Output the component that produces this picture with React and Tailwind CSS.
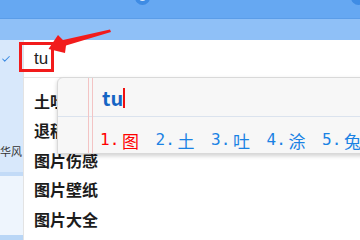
import { Check } from 'lucide-react'

const suggestions = ['土吐', '退稿', '图片伤感', '图片壁纸', '图片大全']
const candidates = ['图', '土', '吐', '涂', '兔']

function ImeWindow() {
  return (
    <div className="absolute left-[57px] top-[77px] w-[320px] h-[77px] rounded-tl-[6px] border border-[#d9d9d9] bg-[#f7f7f7] shadow-[0_2px_4px_rgba(0,0,0,0.18)]">
      {/* notebook-style margin lines */}
      <div className="absolute left-[30px] top-0 bottom-0 w-px bg-[#f3c4c4]" />
      <div className="absolute left-[34px] top-0 bottom-0 w-px bg-[#f3c4c4]" />
      <div className="h-[39px] flex items-end pl-[44px] pb-[6px] border-b border-[#dbe3ee]">
        <span className="text-[20px] leading-[24px] font-bold text-[#1565c4]">tu</span>
        <span className="w-[2px] h-[20px] mb-[2px] bg-[#f01010]" />
      </div>
      <div className="h-[36px] flex items-center pl-[42px] pt-[10px]">
        {candidates.map((c, i) => (
          <span
            key={c}
            className={`w-[55.5px] shrink-0 flex items-center text-[17px] leading-none ${i === 0 ? 'text-[#f00]' : 'text-[#1a82e4]'}`}
          >
            <span className="w-[22px] text-[16px]" style={{ fontFamily: '"DejaVu Sans Mono", monospace' }}>{i + 1}.</span>
            <span>{c}</span>
          </span>
        ))}
      </div>
    </div>
  )
}

export default function App() {
  return (
    <div
      className="relative w-[360px] h-[240px] overflow-hidden bg-white"
      style={{ fontFamily: '"Noto Sans CJK SC", "Noto Sans", sans-serif' }}
    >
      <div className="h-[19px] bg-[#66a8f2] border-b border-[#5b9de8]" />
      <div className="h-[21px] bg-[#8fc0f7]" />

      <div className="flex h-[200px]">
        {/* left strip */}
        <div className="w-[23px] shrink-0 flex flex-col overflow-hidden">
          <div className="h-[132px] bg-[#d8e8fb] flex flex-col">
            <div className="h-[38px] flex items-center pl-[1px]">
              <Check size={10} strokeWidth={2.5} className="text-[#3b8ae2]" />
            </div>
            <div className="mt-auto mb-[15px] text-[11px] leading-none text-[#333] whitespace-nowrap">华风</div>
          </div>
          <div className="h-[4px] bg-[#c3dbf7]" />
          <div className="flex-1 bg-[#eef5fd]" />
          <div className="h-[5px] bg-[#b9d6f6]" />
        </div>

        {/* search box + dropdown */}
        <div className="flex-1 flex flex-col bg-white border-l border-[#e3e3e3]">
          <div className="h-[38px] flex items-center pl-[10px] border-b border-[#e6e6e6]">
            <span className="text-[17px] leading-none text-[#222]" style={{ fontFamily: '"Liberation Sans", sans-serif' }}>tu</span>
          </div>
          <div className="flex flex-col pt-[8px]">
            {suggestions.map(s => (
              <div key={s} className="h-[29.5px] flex items-center pl-[10px] text-[16px] font-bold text-[#1c1c1c]">
                {s}
              </div>
            ))}
          </div>
        </div>
      </div>

      {/* top partial icons */}
      <div className="absolute left-[135px] -top-[10px] w-[15px] h-[15px] rounded-full bg-[#3f8ce4] flex items-center justify-center">
        <div className="w-[7px] h-[7px] rounded-full bg-[#dcecfd]" />
      </div>
      <div className="absolute left-[351px] -top-[10px] w-[15px] h-[15px] rounded-full bg-[#3f8ce4]" />

      <ImeWindow />

      {/* annotation: red box and arrow */}
      <div className="absolute left-[19px] top-[42px] w-[35px] h-[30px] border-[3px] border-[#f21b1b]" />
      <svg className="absolute left-0 top-0" width="360" height="240" viewBox="0 0 360 240">
        <polygon points="110,29.5 63,40 58,35 48.5,49 65,53 66,45.5 111,32" fill="#f21b1b" />
      </svg>
    </div>
  )
}
